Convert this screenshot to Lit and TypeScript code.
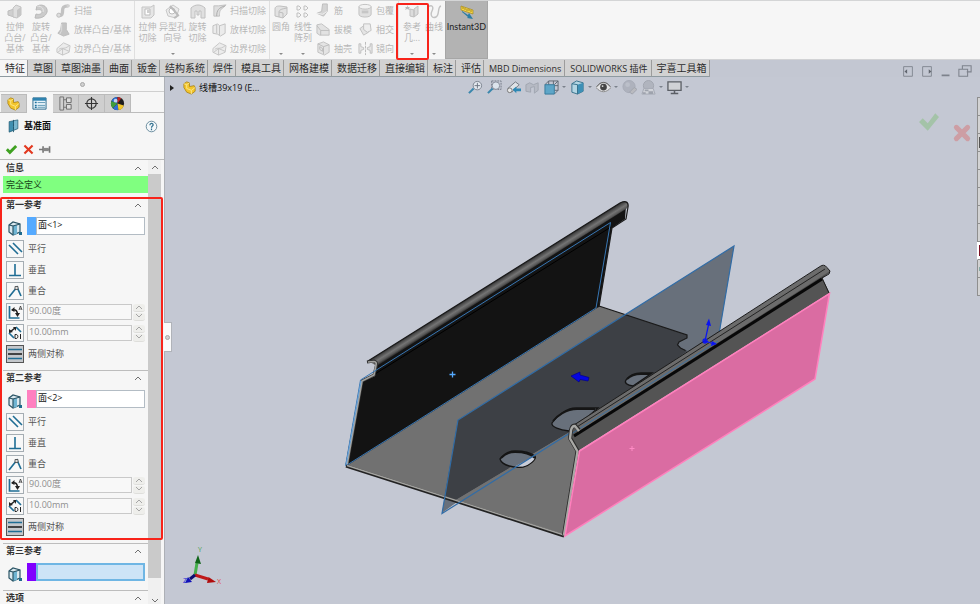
import { LitElement, html, svg, css, nothing } from "lit";
import { customElement, property, state } from "lit/decorators.js";
import { classMap } from "lit/directives/class-map.js";

/* ---------- icons, all on a 16 x 16 grid ---------- */
const art: Record<string, any> = {
  // ribbon, disabled look
  extrude: svg`<path d="M1 7 7 5v8l-6-2z" fill="#cfcfcf" stroke="#bdbdbd"/><path d="M6 4 9 1l5 2v8l-4 3-4-1z" fill="#dedede" stroke="#c2c2c2"/><path d="M10 6v8l4-3V3z" fill="#c6c6c6"/>`,
  revolve: svg`<path d="M4 2c7-3 11 2 10 6s-6 7-12 6l1-4c3 1 6 0 6-2s-2-3-6-2z" fill="#cbcbcb" stroke="#b9b9b9"/><path d="M4 2c5 0 7 3 6 6" fill="none" stroke="#e8e8e8"/>`,
  sweep: svg`<path d="M2 13c5 1 5-2 5-5s1-5 6-5" fill="none" stroke="#c2c2c2" stroke-width="3.6"/><circle cx="3" cy="13" r="2.2" fill="#ddd" stroke="#bbb"/><circle cx="13" cy="3" r="1.8" fill="#d2d2d2"/>`,
  loft: svg`<path d="M6 1h5v7l3 5-6 2-6-3 3-4z" fill="#c4c4c4" stroke="#bcbcbc"/><path d="M6 2v7l-2 4" stroke="#ddd" fill="none"/>`,
  boundary: svg`<path d="M1 8 8 2l7 3-1 7-7 3-6-3z" fill="#ececec" stroke="#c4c4c4"/><path d="M3 9c3-3 5 1 11-4M2 12l5-4 7 3M7 8v7" fill="none" stroke="#c4c4c4"/>`,
  cutExtrude: svg`<path d="M2 3h9l3-2v10l-3 3H2z" fill="#e6e6e6" stroke="#c4c4c4"/><path d="M5 5h5v6H5z" fill="#fff" stroke="#bdbdbd"/><path d="M7 6h3v3H7z" fill="#cfcfcf"/>`,
  hole: svg`<path d="M1 6 8 1l6 4-3 9-8-2z" fill="#ececec" stroke="#c8c8c8"/><circle cx="7" cy="7" r="3" fill="#fff" stroke="#bbb"/><path d="m5 2 8 9M9 14l5-3" stroke="#bbb" stroke-width="2"/>`,
  cutRevolve: svg`<path d="M1 4c4-4 10-4 14 0v10h-4V7H9v4H7V7H5v7H1z" fill="#e0e0e0" stroke="#c0c0c0"/>`,
  cutSweep: svg`<path d="M2 3h5l8-1-3 3c-4 2-4 5-4 9H2z" fill="#dedede" stroke="#c0c0c0"/><path d="M5 14c0-6 2-9 9-11" stroke="#aaa" fill="none"/>`,
  cutLoft: svg`<path d="M1 4l5-2 2 2 6-2v10l-5 3-3-2-5-1zM8 4v10M5 3v9" fill="#ebebeb" stroke="#c0c0c0"/>`,
  fillet: svg`<path d="M2 5c0-3 3-3 5-3l7 1v7l-4 4-8-2z" fill="#e2e2e2" stroke="#c0c0c0"/><path d="M6 13V8c0-2 2-3 8-4M6 8l4 1v5" fill="none" stroke="#bdbdbd"/>`,
  pattern: svg`<path d="M2 2h2l2 2-2 2H2zM9 2h2l2 2-2 2H9zM2 9h2l2 2-2 2H2zM9 9h2l2 2-2 2H9z" fill="#f4f4f4" stroke="#c0c0c0"/>`,
  rib: svg`<path d="M7 1h5v8l-4 5-7-3 5-2z" fill="#d4d4d4" stroke="#bcbcbc"/><path d="m1 11 6 1 5-3" fill="none" stroke="#eee"/>`,
  draft: svg`<path d="m1 3 5-1 8 6v6H4l-3-2z" fill="#e2e2e2" stroke="#c0c0c0"/><path d="m1 4 4 5h9M5 9v5" fill="none" stroke="#bdbdbd"/>`,
  shell: svg`<path d="m2 3 6-2 6 3v8l-5 3-7-3z" fill="#e4e4e4" stroke="#c0c0c0"/><path d="m2 3 6 3v8M8 6l6-2M4 6l3 2v3L4 9z" fill="none" stroke="#bbb"/>`,
  wrap: svg`<path d="M1 4v8c0 4 13 4 13 0V4" fill="#e0e0e0" stroke="#c0c0c0"/><ellipse cx="7.500" cy="4" rx="6.500" ry="2.500" fill="#f2f2f2" stroke="#c0c0c0"/><path d="M4 8h7v3H4z" fill="#c6c6c6"/>`,
  intersect: svg`<path d="m2 7 4-3 5 1v6l-5 3z" fill="#e4e4e4" stroke="#c0c0c0"/><path d="M6 2h7l1 7-4 2-4-3z" fill="#eee" stroke="#c0c0c0"/>`,
  mirror: svg`<path d="M8 1v14" stroke="#b8b8b8" stroke-dasharray="3 1"/><path d="M1 3h2v3l3 1v2l-3 1v3H1zM15 3h-2v3l-3 1v2l3 1v3h2z" fill="#e6e6e6" stroke="#c0c0c0"/>`,
  refgeo: svg`<path d="m3 1 1 2h2L5 4l1 2-3-1-2 1 1-2-1-1h2z" fill="#b8b8b8"/><path d="m6 5 4 1v7l-4-1zM10 5l4-3v8l-4 3z" fill="#dcdcdc" stroke="#c0c0c0"/>`,
  curve: svg`<path d="M2 3c4-3 6 0 4 4s0 8 4 6 1-10 5-11" fill="none" stroke="#c2c2c2" stroke-width="1.400"/>`,
  instant: svg`<path d="m2 2 12 4v4L2 6z" fill="#f5d445" stroke="#a58a1d" stroke-width=".7"/><path d="M4 3v2M6 4v2M8 5v2M10 5v2M12 6v2" stroke="#886f14" stroke-width=".7"/><path d="m3 7 6 4 1-2 4 6-6-1 1-1-6-5z" fill="#2b7da3"/>`,
  // property manager
  part: svg`<path d="M2 4 5 2l3 1v4l5-1 1 2v4l-4 3-5-2-3-5z" fill="#f3c52c" stroke="#a57d10" stroke-width=".8"/><path d="m2 4 3 1v4l5 2 4-3M5 5l3-2M10 11v4" fill="none" stroke="#fbe68a"/>`,
  list: svg`<path d="M1 2h14v12H1z" fill="#e9f4fa" stroke="#27668a"/><path d="M1 2h14v3H1z" fill="#2f83b0"/><path d="M3 7h2M3 10h2M3 12h2" stroke="#1e6f9b" stroke-width="1.500"/><path d="M6 7h8M6 10h8M6 12h8" stroke="#5b95b3"/>`,
  config: svg`<path d="M2 1h4v14H2zM6 4h3M6 12h3" fill="none" stroke="#707070"/><path d="M9 2h5v5H9zM9 9h5v5H9z" fill="#ddd" stroke="#666"/>`,
  target: svg`<circle cx="8" cy="8" r="5" fill="none" stroke="#333" stroke-width="1.200"/><path d="M8 1v14M1 8h14" stroke="#333" stroke-width="1.200"/>`,
  ball: svg`<circle cx="8" cy="8" r="7" fill="#1d1d1d"/><path d="M8 8 1.500 5.500A7 7 0 0 1 8 1z" fill="#2f6fd0"/><path d="M8 8 1.500 5.500A7 7 0 0 0 3 13z" fill="#3f9d3c"/><path d="M8 8 3 13a7 7 0 0 0 6 2z" fill="#2f6fd0"/><path d="m8 8 1 7a7 7 0 0 0 5.700-5z" fill="#f0c52c"/><path d="M8 8V1a7 7 0 0 1 4 1.500z" fill="#c22626"/><circle cx="6" cy="5" r="2" fill="#fff" opacity=".7"/>`,
  plane: svg`<path d="m3 3 5-1v11l-5 2z" fill="#3f8fb0" stroke="#1f5870" stroke-width=".8"/><path d="m8 2 5-1v10l-5 2z" fill="#78b6cf" stroke="#1f5870" stroke-width=".8"/><path d="M8 1v14" stroke="#1f5870" stroke-dasharray="3 1"/>`,
  help: svg`<circle cx="8" cy="8" r="6.500" fill="#f4f8fa" stroke="#50788c"/><path d="M6 6.500c0-3 4-3 4-.5 0 1.500-2 1.500-2 3.500M8 10.500v2" fill="none" stroke="#2f6f8f" stroke-width="1.500"/>`,
  ok: svg`<path d="m1 9 2.500-2.500L6 9l6.500-6.500L15 5 6 14z" fill="#3fa121"/>`,
  cancel: svg`<path d="m3 3 10 10M13 3 3 13" stroke="#e2381f" stroke-width="2.600"/>`,
  pin: svg`<path d="M0 8h5M9 8h4" stroke="#777" stroke-width="1.600"/><path d="M5 4v8M13 4v8" stroke="#777" stroke-width="2"/><path d="M6 6h6v4H6z" fill="#888"/>`,
  face: svg`<path d="m2 5 4-3 7 2v8l-7 3-4-3z" fill="#dbe9ef" stroke="#2b5566" stroke-width="1.200"/><path d="m6 6 4-1v9l-4 1z" fill="#6fb4d2"/><path d="m2 5 4 1v9M6 6l7-2" fill="none" stroke="#2b5566" stroke-width="1.200"/><path d="M12 12h3v3h-3z" fill="#1e6a8c"/>`,
  parallel: svg`<path d="m2 4 9 9M6 2l9 9" stroke="#1f6d94" stroke-width="1.600"/>`,
  perp: svg`<path d="M8 2v11M2 13.500h12" stroke="#1f6d94" stroke-width="1.600"/>`,
  coincide: svg`<path d="m2 14 8-10 4 9" fill="none" stroke="#1f6d94" stroke-width="1.700"/><path d="M8 3.500h3v3H8z" fill="#ddd" stroke="#444" stroke-width=".8"/>`,
  angle: svg`<path d="M2.500 2v12h10" fill="none" stroke="#1f6d94" stroke-width="1.700"/><path d="M5 6c4-1 5.500 1 5.500 5" fill="none" stroke="#222" stroke-width="1.500"/><path d="m4 6 3.500-3v5zM8 9h5l-2.500 4z" fill="#222"/><path d="m12 6 1.500-4L15 6M12.500 5h2" fill="none" stroke="#333" stroke-width=".8"/>`,
  distance: svg`<path d="m2 8 5 5M9 2l5 5" stroke="#1f6d94" stroke-width="1.700"/><path d="m3 7 5-4" stroke="#222" stroke-width="1.600"/><path d="M2 8V4l4 3zM9 2v4L6 2z" fill="#222"/><path d="M8 9.500v4h1c2.500 0 2.500-4 0-4zM13.500 9v5" fill="#fff" stroke="#222"/>`,
  middle: svg`<path d="M1 3.500h14M1 12.500h14" stroke="#1f6d94" stroke-width="1.600"/><path d="M1 8h14" stroke="#222" stroke-width="1.600"/>`,
  // heads-up view toolbar
  zoomFit: svg`<circle cx="10" cy="6" r="4.500" fill="#e4e9f0" stroke="#7b828e"/><path d="M10 3v6M7 6h6" stroke="#6d7480"/><path d="m6 9-5 5" stroke="#3b87ad" stroke-width="2.200"/>`,
  zoomArea: svg`<path d="M5 1h10v9H5z" fill="none" stroke="#737a86" stroke-dasharray="2 1"/><circle cx="9.500" cy="6" r="4" fill="#dce4ec" stroke="#848b97"/><path d="m6 9-5 5" stroke="#3b87ad" stroke-width="2.200"/>`,
  prev: svg`<path d="M2 9 10 2l4 3-8 8z" fill="#dfe2e6" stroke="#6f757e"/><circle cx="4" cy="11" r="2.500" fill="#e8e8e8" stroke="#777"/><path d="m7 10 4-3v2h5v3h-5v2z" fill="#2e88b4"/>`,
  section: svg`<path d="m1 5 4-2 4 2 5-2v8l-4 3V7L6 8v5l-5-1z" fill="#b6bac4" stroke="#a0a5b0"/>`,
  orient: svg`<path d="M5 1h10v10h-4M5 1v4M15 1l-4 4M5 1 1 5M10 1v4M15 6h-4M15 11l-4 4" fill="none" stroke="#5f6671"/><path d="M1 5h10v10H1z" fill="#5ea6c8" stroke="#367a9b"/>`,
  display: svg`<path d="m2 4 5-3 7 2v9l-6 3-6-2z" fill="#b3d5e3" stroke="#35708b"/><path d="m8 5 6-2v9l-6 3z" fill="#3e90b6"/><path d="m2 4 6 1v10" fill="none" stroke="#35708b"/>`,
  eye: svg`<path d="M0 8c5-7 11-7 16 0-5 6-11 6-16 0z" fill="#e2e2e4" stroke="#888"/><circle cx="8" cy="7.500" r="3.600" fill="#444"/><circle cx="7" cy="6.500" r="1" fill="#ddd"/><path d="M1 7c4-6 10-6 14 0" stroke="#666" fill="none"/>`,
  appearance: svg`<circle cx="7.500" cy="7" r="6.500" fill="#aeb2bd" stroke="#a6abb6"/><circle cx="6" cy="5" r="2.500" fill="#bbbfc9"/><path d="m8 13 5-5 3 2-5 5z" fill="#b9babf" stroke="#9fa3ad"/>`,
  sceneIcon: svg`<circle cx="8" cy="6" r="5.500" fill="#b0b4be" stroke="#a1a5af"/><path d="M1 15 3 9h10l2 6z" fill="#d0d3d9" stroke="#a4a9b3"/><path d="M4 10h4v2H4zM8 12h5v3H8zM2 13h3v2H2z" fill="#9ea3ad"/>`,
  monitor: svg`<path d="M1 2h14v9H1z" fill="#d0d2d6" stroke="#5b5f66" stroke-width="1.400"/><path d="M8 11v3M4 14.500h8" stroke="#5b5f66" stroke-width="1.600"/>`,
  paneLeft: svg`<path d="M3 3h10v11H3z" fill="none" stroke="#7d828c"/><path d="m7 6-3 2.500L7 11z" fill="#60656e"/>`,
  paneRight: svg`<path d="M3 3h10v11H3z" fill="none" stroke="#7d828c"/><path d="m10 6 3 2.500-3 2.500z" fill="#60656e"/>`,
  minimize: svg`<path d="M3 13h9" stroke="#7d828c" stroke-width="2"/>`,
  restore: svg`<path d="M5 6V2h10v7h-5M1 6h10v8H1z" fill="none" stroke="#7d828c" stroke-width="1.200"/>`,
  bigOk: svg`<path d="m0 8 3-3 4 4 6-8 3 3-9 11z" fill="#a4c3a8"/>`,
  bigNo: svg`<path d="m3.500 3.500 9 9M12.500 3.500l-9 9" stroke="#cd9ea4" stroke-width="4" stroke-linecap="round"/>`,
};
const icon = (name: string, cls = "") =>
  html`<svg class="icon ${cls}" viewBox="0 0 16 16" aria-hidden="true">${art[name]}</svg>`;

const chevron = (up = true) =>
  html`<svg class="chev" viewBox="0 0 8 6" aria-hidden="true"><path d=${up ? "M1 5 4 2l3 3" : "M1 1l3 3 3-3"} fill="none" stroke="#707070"/></svg>`;

const base = css`
  :host, * { box-sizing: border-box; }
  button, input {
    font: inherit; color: inherit; margin: 0; padding: 0;
    border: 0; background: none; border-radius: 0;
  }
  .icon { width: 16px; height: 16px; flex: none; display: block; }
  .chev { width: 8px; height: 6px; flex: none; display: block; }
`;

/* ---------- ribbon ---------- */
type Tool = { icon: string; lines: string[]; menu?: boolean };
type Group = { key: string; big: Tool[]; lists: [string, string][][] };

const groups: Group[] = [
  {
    key: "boss",
    big: [
      { icon: "extrude", lines: ["拉伸", "凸台/", "基体"] },
      { icon: "revolve", lines: ["旋转", "凸台/", "基体"] },
    ],
    lists: [[["sweep", "扫描"], ["loft", "放样凸台/基体"], ["boundary", "边界凸台/基体"]]],
  },
  {
    key: "cut",
    big: [
      { icon: "cutExtrude", lines: ["拉伸", "切除"] },
      { icon: "hole", lines: ["异型孔", "向导"], menu: true },
      { icon: "cutRevolve", lines: ["旋转", "切除"] },
    ],
    lists: [[["cutSweep", "扫描切除"], ["cutLoft", "放样切除"], ["boundary", "边界切除"]]],
  },
  {
    key: "feature",
    big: [
      { icon: "fillet", lines: ["圆角"], menu: true },
      { icon: "pattern", lines: ["线性", "阵列"], menu: true },
    ],
    lists: [
      [["rib", "筋"], ["draft", "拔模"], ["shell", "抽壳"]],
      [["wrap", "包覆"], ["intersect", "相交"], ["mirror", "镜向"]],
    ],
  },
  {
    key: "ref",
    big: [
      { icon: "refgeo", lines: ["参考", "几..."], menu: true },
      { icon: "curve", lines: ["曲线"], menu: true },
    ],
    lists: [],
  },
];

const tabs = [
  "特征", "草图", "草图油墨", "曲面", "钣金", "结构系统", "焊件", "模具工具",
  "网格建模", "数据迁移", "直接编辑", "标注", "评估", "MBD Dimensions",
  "SOLIDWORKS 插件", "宇喜工具箱",
];

const windowButtons: [string, string][] = [
  ["paneLeft", "左窗格"], ["paneRight", "右窗格"], ["minimize", "最小化"], ["restore", "还原"],
];

@customElement("command-ribbon")
class CommandRibbon extends LitElement {
  @state() private active = 0;

  static styles = [base, css`
    :host { display: block; flex: none; }
    .ribbon {
      display: flex; height: 60px; background: #f6f6f6; color: #b6b6b6;
      border-top: 1px solid #d4d5d6; border-bottom: 1px solid #d2d3d5;
      line-height: 11px; padding-left: 2px;
    }
    .group { display: flex; flex: none; padding-right: 2px; border-right: 1px solid #dfdfdf; }
    .boss { width: 133px; }
    .cut { width: 135px; }
    .feature { width: 129px; }
    .ref { border-right: 0; padding-right: 0; width: 46px; }
    .big {
      display: flex; flex-direction: column; align-items: center; flex: none;
      width: 26px; padding: 3px 0 4px; white-space: nowrap;
    }
    .cut .big { width: 25px; }
    .feature .big { width: 22px; }
    .ref .marked + .big { width: 18px; }
    .big span { display: block; margin-top: 1px; text-align: center; }
    .caret {
      width: 0; margin-top: auto; border: 2px solid transparent;
      border-top-color: #8a8a8a; border-bottom: 0;
    }
    .list { display: flex; flex-direction: column; flex: none; padding-left: 2px; }
    .list + .list { padding-left: 6px; }
    .small { display: flex; align-items: center; gap: 4px; height: 19px; white-space: nowrap; }
    .small .icon { width: 15px; height: 15px; margin-right: -1px; }
    .instant {
      width: 43px; flex: none; display: flex; flex-direction: column; align-items: center; gap: 1px;
      padding-top: 3px; background: #b3b3b3; border: 1px solid #a6a6a6; border-top: 0;
      color: #222; height: 58px; font-family: Lato, sans-serif;
    }
    .marked { position: relative; }
    .marked::after {
      content: ""; position: absolute; inset: 2px -4px -1px -3px; z-index: 2;
      border: 2px solid #f8231a; border-radius: 2px;
    }
    .strip { display: flex; justify-content: space-between; height: 17px; background: #c3c7d2; }
    .tabs { display: flex; font-size: 10px; line-height: 15px; }
    .tab {
      padding: 0 2px 0 5px; white-space: nowrap; background: #d2d2d2; color: #2c2c2c; flex: none;
      border-right: 1px solid #9c9c9c; border-bottom: 1px solid #8e9aa0;
    }
    .tab.on { background: #f6f6f6; }
    .latin { font-size: 9px; padding-right: 3px; }
    .win { display: flex; align-items: center; gap: 5px; padding: 5px 8px 0 0; }
    .win .icon { width: 14px; height: 14px; }
  `];

  private tool(t: Tool) {
    return html`<button class="big ${t.icon === "refgeo" ? "marked" : ""}">
      ${icon(t.icon)}<span>${t.lines.map((l, i) => html`${i ? html`<br>` : nothing}${l}`)}</span>
      ${t.menu ? html`<i class="caret"></i>` : nothing}
    </button>`;
  }

  render() {
    return html`
      <div class="ribbon" role="toolbar">
        ${groups.map((g) => html`<div class="group ${g.key}">
          ${g.big.map((t) => this.tool(t))}
          ${g.lists.map((l) => html`<div class="list">
            ${l.map(([i, text]) => html`<button class="small">${icon(i)}${text}</button>`)}
          </div>`)}
        </div>`)}
        <button class="instant">${icon("instant")}Instant3D</button>
      </div>
      <div class="strip">
        <div class="tabs" role="tablist">
          ${tabs.map((t, i) => html`<button role="tab" aria-selected=${i === this.active}
            class=${classMap({ tab: true, on: i === this.active, latin: /[A-Z]/.test(t) })}
            @click=${() => (this.active = i)}>${t}</button>`)}
        </div>
        <div class="win">
          ${windowButtons.map(([n, label]) => html`<button aria-label=${label}>${icon(n)}</button>`)}
        </div>
      </div>`;
  }
}

/* ---------- property manager ---------- */
const relations: [string, string][] = [["parallel", "平行"], ["perp", "垂直"], ["coincide", "重合"]];
const dims: [string, string, string][] = [["angle", "90.00度", "角度"], ["distance", "10.00mm", "距离"]];

@customElement("property-manager")
class PropertyManager extends LitElement {
  static styles = [base, css`
    :host {
      display: flex; flex-direction: column; flex: none; width: 165px; min-height: 0;
      position: relative; background: #f6f6f6; border-right: 1px solid #adb0b6; color: #333;
    }
    .grip {
      height: 15px; flex: none; display: flex; align-items: center; justify-content: center;
      border-bottom: 1px solid #cfcfcf;
    }
    .dot { width: 5px; height: 5px; border-radius: 50%; background: #d0d0d0; border: 1px solid #a8a8a8; }
    .tabs { display: flex; flex: none; height: 21px; padding: 2px 0 0 1px; border-bottom: 1px solid #bcbcbc; }
    .tab {
      width: 26px; height: 19px; display: grid; place-items: center; background: #cfcfcf;
      border: 1px solid #bbb; border-left: 0;
    }
    .tab.on { background: #f6f6f6; border-color: #f6f6f6; }
    .tab .icon { width: 15px; height: 15px; }
    .title { display: flex; flex: none; align-items: center; height: 26px; padding: 0 6px; gap: 3px; }
    h1 { font-size: 9px; margin: 0; flex: 1; color: #111; }
    .title .icon { width: 15px; height: 14px; }
    .title button .icon { width: 13px; height: 13px; }
    .actions {
      display: flex; flex: none; align-items: center; height: 21px; gap: 4px; padding-left: 5px;
      border-bottom: 1px solid #b9b9b9;
    }
    .actions .icon { width: 13px; height: 13px; }
    .body { display: flex; flex: 1; min-height: 0; padding-right: 3px; }
    .content { flex: 1; min-width: 0; padding-left: 3px; overflow: hidden; }
    .bar { width: 13px; flex: none; display: flex; flex-direction: column; align-items: center; background: #f0f0f0; }
    .bar button { height: 14px; display: grid; place-items: center; }
    .bar .thumb { flex: 1; width: 13px; background: #cacaca; }
    .bar .down { height: 26px; align-items: end; }
    .head {
      display: flex; align-items: center; justify-content: space-between; width: 100%;
      height: 17px; padding: 0 6px 2px 3px; font-weight: bold; border-top: 1px solid #bdbdbd;
    }
    .info { height: 16px; border-top: 0; padding-bottom: 0; }
    .status { height: 17px; margin-bottom: 4px; padding-left: 3px; line-height: 17px; background: #80ff80; color: #174217; }
    .plain { border-top-color: transparent; }
    .section { display: flex; flex-direction: column; padding: 3px 3px 7px; gap: 3px; }
    .pick { display: flex; align-items: center; margin-bottom: 2px; height: 18px; }
    .pick .icon { width: 16px; height: 16px; margin: 3px 4px 0 1px; }
    .swatch { width: 9px; height: 18px; flex: none; }
    .s1 { background: #55aaff; }
    .s2 { background: #ff80c0; }
    .s3 { background: #8000ff; }
    .pick input {
      flex: 1; min-width: 0; height: 18px; padding: 0 1px 4px; background: #fff;
      border: 1px solid #b3bcc4; color: #111;
    }
    .pick .focus { background: #cde4f7; border: 2px solid #6fb6e4; }
    .row { display: flex; align-items: center; height: 18px; gap: 4px; color: #555; }
    .box { width: 18px; height: 18px; flex: none; display: grid; place-items: center; border: 1px solid #a5adb3; background: #f8f8f8; }
    .box.on { background: #c4c7cb; border-color: #555; }
    .row input {
      flex: 1; min-width: 0; height: 16px; padding: 0 1px 4px; border: 1px solid #c9c9c9;
      background: #f8f8f8; color: #8f8f8f; margin-left: -1px;
    }
    .spin { display: flex; flex-direction: column; width: 12px; gap: 1px; margin-left: -3px; }
    .spin button { height: 8px; display: grid; place-items: center; background: #e9e9e4; border-radius: 3px; border-bottom: 1px solid #cfcfca; opacity: .6; }
    .last { padding-bottom: 7px; }
    /* selection callout drawn over the two reference sections */
    .callout {
      position: absolute; top: 120px; left: 0; right: 1px; height: 343px; pointer-events: none;
      border: 2px solid #f8231a; border-radius: 2px;
    }
    .handle {
      position: absolute; left: 164px; top: 245px; width: 8px; height: 30px; z-index: 2;
      display: grid; place-items: center; background: #fafafa; border: 1px solid #b0b3b9; border-left: 0;
    }
  `];

  private picker(n: number, value: string) {
    return html`<div class="pick">${icon("face")}<span class="swatch s${n}"></span>
      <input class=${n === 3 ? "focus" : ""} aria-label="参考 ${n}" .value=${value}></div>`;
  }

  private reference(n: number, title: string, value: string) {
    return html`
      <button class="head ${n === 1 ? "plain" : ""}">${title}${chevron()}</button>
      <div class="section">
        ${this.picker(n, value)}
        ${relations.map(([i, t]) => html`<button class="row"><span class="box">${icon(i)}</span>${t}</button>`)}
        ${dims.map(([i, v, label]) => html`<div class="row">
          <span class="box">${icon(i)}</span>
          <input aria-label=${label} .value=${v} disabled>
          <span class="spin">
            <button aria-label="增加" disabled>${chevron()}</button>
            <button aria-label="减少" disabled>${chevron(false)}</button>
          </span></div>`)}
        <button class="row"><span class="box on">${icon("middle")}</span>两侧对称</button>
      </div>`;
  }

  render() {
    return html`
      <div class="grip"><i class="dot"></i></div>
      <div class="tabs" role="tablist">
        ${["part", "list", "config", "target", "ball"].map((n, i) => html`
          <button role="tab" aria-label=${n} class=${classMap({ tab: true, on: i === 1 })}>${icon(n)}</button>`)}
      </div>
      <div class="title">${icon("plane")}<h1>基准面</h1><button aria-label="帮助">${icon("help")}</button></div>
      <div class="actions">
        <button aria-label="确定">${icon("ok")}</button>
        <button aria-label="取消">${icon("cancel")}</button>
        <button aria-label="固定">${icon("pin")}</button>
      </div>
      <div class="body">
        <div class="content">
          <button class="head info">信息${chevron()}</button>
          <div class="status">完全定义</div>
          ${this.reference(1, "第一参考", "面<1>")}
          ${this.reference(2, "第二参考", "面<2>")}
          <button class="head">第三参考${chevron()}</button>
          <div class="section last">${this.picker(3, "")}</div>
          <button class="head">选项${chevron()}</button>
        </div>
        <div class="bar">
          <button aria-label="向上滚动">${chevron()}</button>
          <div class="thumb"></div>
          <button class="down" aria-label="向下滚动">${chevron(false)}</button>
        </div>
      </div>
      <div class="callout"></div>
      <button class="handle" aria-label="折叠面板"><i class="dot"></i></button>`;
  }
}

/* ---------- graphics area ---------- */
const viewTools: [string, boolean, string][] = [
  ["zoomFit", false, "整屏显示全图"], ["zoomArea", false, "局部放大"], ["prev", false, "上一视图"],
  ["section", false, "剖面视图"], ["orient", true, "视图定向"], ["display", true, "显示样式"],
  ["eye", true, "隐藏/显示项目"], ["appearance", false, "编辑外观"], ["sceneIcon", true, "应用布景"],
  ["monitor", true, "视图设定"],
];

@customElement("graphics-area")
class GraphicsArea extends LitElement {
  @property({ type: String }) document = "线槽39x19 (E...";

  static styles = [base, css`
    :host { display: block; flex: 1; min-width: 0; position: relative; background: #c4c8d3; overflow: hidden; }
    .scene { position: absolute; inset: 0; width: 100%; height: 100%; }
    .axis { font-size: 7px; }
    .top { position: relative; display: grid; grid-template-columns: 303px 1fr; align-items: start; }
    .node { display: flex; align-items: center; gap: 2px; height: 21px; padding-left: 5px; color: #111; }
    .node i { border: 3px solid transparent; border-left: 4px solid #222; border-right: 0; margin-right: 6px; }
    .node .icon { width: 15px; height: 15px; }
    .tools { display: flex; align-items: center; height: 20px; gap: 4px; }
    .tools button { display: flex; align-items: center; gap: 3px; }
    .tools .icon { width: 15px; height: 15px; }
    .tools i { border: 2px solid transparent; border-top-color: #7b818c; border-bottom: 0; }
    .confirm { position: absolute; right: 8px; top: 24px; display: grid; grid-template-columns: 22px 20px; gap: 0 12px; }
    .confirm .icon { width: 22px; height: 20px; }
    .confirm .no { margin-top: 22px; }
    .confirm .no .icon { width: 20px; height: 20px; }
    .pane { position: absolute; right: 0; top: 20px; width: 3px; display: flex; flex-direction: column; border-top: 1px solid #8f8f8f; }
    .pane button { height: 18px; background: #d3d3d3; border-left: 1px solid #8f8f8f; border-bottom: 1px solid #8f8f8f; padding: 3px 0 3px 1px; }
    .pane button span { display: block; height: 11px; }
    .pane .lit { background: #fff; border-left-color: #fff; }
    .pane .dark span { background: #555; }
    .pane .lit span { background: #7b1024; }
    .pane .teal span { background: #88a9a5; height: 4px; }
  `];

  private scene() {
    return html`<svg class="scene" viewBox="165 77 815 527" role="img" aria-label="3D 模型">
      <defs>
        <linearGradient id="tube" gradientUnits="userSpaceOnUse" x1="497" y1="280" x2="502" y2="288">
          <stop offset="0" stop-color="#303030"/><stop offset=".25" stop-color="#525252"/>
          <stop offset=".5" stop-color="#747474"/><stop offset=".75" stop-color="#5a5a5a"/>
          <stop offset="1" stop-color="#202020"/>
        </linearGradient>
      </defs>

      <!-- floor -->
      <path d="M346 466 599 306l88 29v2.500l-8 4-1.500 3 3 3 7 3L577 428l-13 108z" fill="#717171"/>

      <!-- reference plane in front of the background and floor -->
      <path d="M458 420 734 246l-16 95-70 45-75 44-116 72-15 11z" fill="#68707b"/>
      <path d="M458 420 625 314.500l62 20.500v3l-8 4-1.500 3 3 3 7 3L573 430 455 500.500l-10.500-3.500z" fill="#3d4045"/>
      <path d="M455 500.500 573 430l5 20-14 86z" fill="#717171"/>
      <path d="M599 306l88 29v3l-8 4-1.500 3 3 3 5 2.500" fill="none" stroke="#1a1a1a" stroke-width="1.200"/>

      <!-- slots -->
      <path d="M500 459c4-5 10-8 15-8 8 0 15 1 20 5 2 3-6 10-12 11-8 1-21-1-23-8z" fill="#68707b" stroke="#151515" stroke-width="1.300"/>
      <path d="M515 466.500 534 456c3 3-5 9-11 10.500z" fill="#c8ccd7"/>
      <path d="M501 458c4-4 9-6 14-6 9 0 15 1 20 6" fill="none" stroke="#151515" stroke-width="1.800"/>
      <path d="M569 431c-9-1-18-4-17-8 4-6 14-15 24-15h22l-22 19z" fill="#68707b" stroke="#151515" stroke-width="1.300"/>
      <path d="M553 421c4-5 13-12 24-12h18" fill="none" stroke="#151515" stroke-width="2"/>
      <path d="M633 386c-6-1-9-3-7-6 4-5 10-7 15-7h11z" fill="#68707b" stroke="#151515" stroke-width="1.300"/>
      <path d="M627 379c4-4 9-5 14-5h9" fill="none" stroke="#151515" stroke-width="2"/>

      <!-- left wall -->
      <path d="m348 465 14-83 13-6 2-14 249-156-1 13-13 9-13 79-2 1z" fill="#131313"/>
      <path d="m375 374 236-147" stroke="#000" fill="none"/>
      <path d="M368 361 620 203c4-2.500 9-2 8 4l-2 2-249 157z" fill="url(#tube)"/>
      <path d="M368 361 620 203c4-2.500 9-2 8 4l-2 12-14 9-13 79" fill="none" stroke="#191919" stroke-width="1.200"/>
      <path d="m367 362 7-1q3 1 2.500 4L374 375l-12 6-15 84" fill="none" stroke="#333" stroke-width="3"/>
      <path d="m368 362 6-.5q3 .5 2 3.500L374 375l-12 6-15 84" fill="none" stroke="#a2a29f" stroke-width="1.700"/>
      <path d="m345.500 466 15-86L610.500 222.500 596 308 347 465" fill="none" stroke="#3877b4"/>
      <path d="m346 466 15-85" stroke="#6fa9df"/>

      <!-- front edge of the floor -->
      <path d="m346 466 218 70" stroke="#222" stroke-width="3"/>
      <path d="m347 465.500 217 69.500" stroke="#a2a29f" stroke-width="1.400"/>

      <path d="M442 513.500 458 420 734 246l-16 94z" fill="none" stroke="#316ca6" stroke-width="1.200"/>

      <!-- right wall -->
      <path d="M571 428 575 424 820 267q4-3 7 1l3 3-.5 2-7 5 7 15L578 451l-8-13z" fill="#545454"/>
      <path d="M574 425 820 267q4-3 7 1l3 3-252 161z" fill="#6c6c6c"/>
      <path d="m578 432 252-160-8 6L574 437z" fill="#454545"/>
      <path d="M574 436 822 279" stroke="#080808" stroke-width="3"/>
      <path d="M574 425 820 266.500q4-3 7 1l3 3.500-1 3-7 4 7 15" fill="none" stroke="#1c1c1c"/>
      <path d="m576 427.500 249-158.500" stroke="#242424"/>
      <path d="m571 434 147-93" stroke="#3270a8" stroke-width=".8"/>
      <path d="m579 430-4-4.500q-3-.5-4 4.500l-1 8 7.500 13L564 535" fill="none" stroke="#2a2a2a" stroke-width="4"/>
      <path d="m579 431-4-5q-3-.5-4 4.500l-1 8 7.500 13L564 535" fill="none" stroke="#a9a9a6" stroke-width="2.400"/>
      <path d="M579.500 451 829.500 293.500 815 379 565 536z" fill="#da6ca2" stroke="#ff80bd" stroke-width="1.500"/>

      <!-- picked points -->
      <path d="M449.500 374.500h6M452.500 371.500v6" stroke="#55aaff" stroke-width="1.300"/>
      <path d="M629.500 448.500h5M632 446v5" stroke="#ff8cc6"/>
      <!-- normal arrow and origin -->
      <path d="m571 376 9-4v3l9 2.500-1 3.500-8-1.500-1 2.500z" fill="#0606e0" stroke="#00008c" stroke-width=".7"/>
      <path d="m705 341 3.500-16M702 341h6M705 338v6M703 339l4 4M707 339l-4 4M705 341l9 3" stroke="#0a14f0" stroke-width="1.200"/>
      <path d="m709 318.500 2 7.500-5-1zM717 344l-6 2 1-5z" fill="#0a14f0"/>

      <!-- view triad -->
      <path d="m195 575 2-12" stroke="#45b04c" stroke-width="3"/>
      <path d="m198 555 3 9-6-1z" fill="#0f6418"/>
      <path d="m195 575 13 4" stroke="#c01818" stroke-width="3"/>
      <path d="m216 582-9 1 1.500-6z" fill="#b00c0c"/>
      <path d="m195 575-5 4" stroke="#0d0d70" stroke-width="3"/>
      <path d="m185 583 3-6 4 5z" fill="#1010b8"/>
      <text class="axis" x="198" y="552" fill="#46a34c">Y</text>
      <text class="axis" x="217" y="584" fill="#df4a4a">X</text>
      <text class="axis" x="183" y="583" fill="#2727d0">Z</text>
    </svg>`;
  }

  render() {
    const pane = ["", "", "dark", "", "", "", "", "", "lit", "teal", ""];
    return html`
      ${this.scene()}
      <div class="top">
        <div class="node"><i></i>${icon("part")}<span>${this.document}</span></div>
        <div class="tools">
          ${viewTools.map(([n, menu, label]) => html`<button aria-label=${label}>${icon(n)}${menu ? html`<i></i>` : nothing}</button>`)}
        </div>
      </div>
      <div class="confirm">
        <button aria-label="接受">${icon("bigOk")}</button>
        <button class="no" aria-label="放弃">${icon("bigNo")}</button>
      </div>
      <div class="pane">${pane.map((c, i) => html`<button class=${c} aria-label="任务窗格 ${i + 1}"><span></span></button>`)}</div>`;
  }
}

@customElement("app-root")
class AppRoot extends LitElement {
  static styles = css`
    :host {
      display: flex; flex-direction: column; height: 100vh; overflow: hidden;
      font: 9px/12px "Open Sans", "Noto Sans CJK SC", sans-serif;
    }
    main { display: flex; flex: 1; min-height: 0; }
  `;
  render() {
    return html`<command-ribbon></command-ribbon>
      <main><property-manager></property-manager><graphics-area></graphics-area></main>`;
  }
}
